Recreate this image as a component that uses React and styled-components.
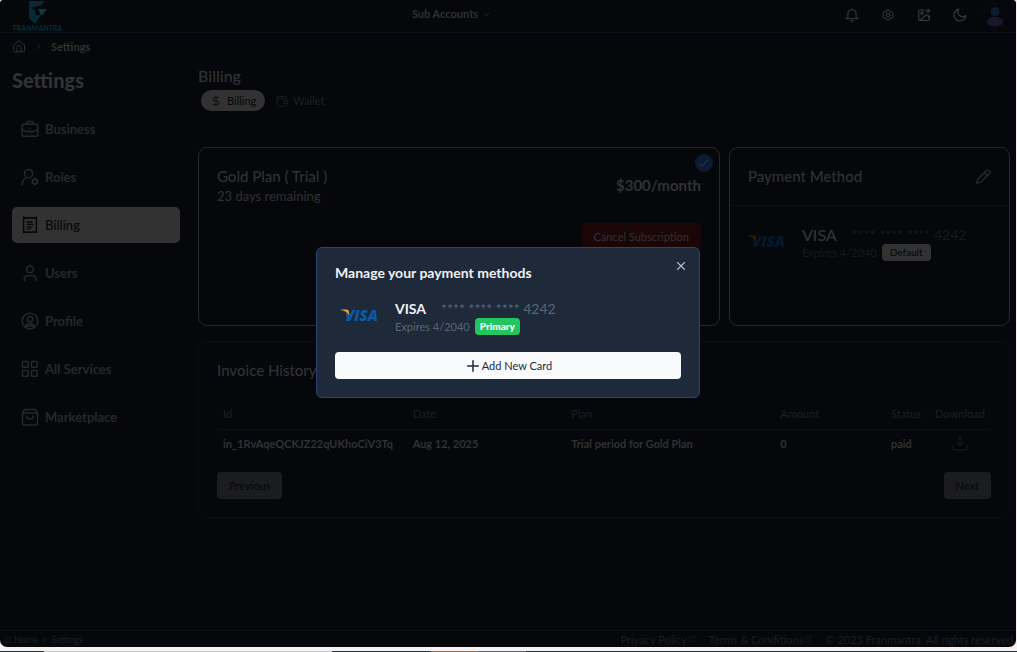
import React, { useState } from 'react'
import styled, { createGlobalStyle } from 'styled-components'
import { ChevronDown, ChevronRight, X, Plus, Check, ExternalLink, DollarSign } from 'lucide-react'


const GlobalStyle = createGlobalStyle`
    * {
        box-sizing: border-box;
    }
    body {
        margin: 0;
        background: #f8f2f4;
        font-family: Lato, 'Open Sans', sans-serif;
        font-size: 12px;
        color: #303234;
    }
    button {
        font: inherit;
        color: inherit;
        border: 0;
        padding: 0;
        background: none;
        cursor: pointer;
    }
    a {
        color: inherit;
        text-decoration: none;
    }
    h1, h2, h3, p {
        margin: 0;
    }
    svg {
        display: block;
        flex: none;
    }
`

const Desktop = styled.div`
    display: flex;
    flex-direction: column;
    min-height: 100vh;
`

const Screen = styled.div`
    position: relative;
    flex: 1;
    display: flex;
    flex-direction: column;
    margin: 0 1px 4px 0;
    background: #05070b;
    border-radius: 3px 3px 7px 7px;
    overflow: hidden;
`

const Taskbar = styled.div`
    display: grid;
    grid-template-columns: 44fr 288fr 99fr 47fr 48fr 491fr;
    height: 1px;
`

const TaskbarItem = styled.span`
    background: ${({ color }) => color};
`

const Header = styled.header`
    display: grid;
    grid-template-columns: 1fr auto 1fr;
    align-items: center;
    height: 33px;
    padding: 0 9px 0 12px;
    border-bottom: 1px solid #0c0e1a;
`

const Logo = styled.a`
    display: flex;
    flex-direction: column;
    align-items: center;
    justify-self: start;
    width: 51px;
    color: #072a35;
    font-size: 7px;
    font-weight: 900;
    line-height: 8px;
`

const SubAccounts = styled.button`
    display: flex;
    align-items: center;
    gap: 4px;
    padding-bottom: 4px;
    padding-right: 116px;
    font-size: 11px;
    font-weight: 700;
    line-height: 16px;
`

const HeaderActions = styled.div`
    display: flex;
    align-items: center;
    justify-content: flex-end;
    gap: 16px;
    padding-bottom: 3px;
    color: #3a3c3e;
`

const HeaderIcons = styled.div`
    display: flex;
    align-items: center;
    gap: 22px;
`

const IconButton = styled.button`
    display: flex;
`

const Breadcrumb = styled.nav`
    display: flex;
    align-items: center;
    gap: 8px;
    height: 26px;
    padding: 0 12px;
    font-size: 11px;
    font-weight: 700;
`

const Body = styled.div`
    display: grid;
    grid-template-columns: 168px 1fr;
    gap: 18px;
    flex: 1;
    padding: 7px 6px 0 12px;
`

const PageTitle = styled.h1`
    padding-bottom: 2px;
    font-size: 20px;
    line-height: 28px;
    font-weight: 900;
`

const SideNav = styled.nav`
    display: flex;
    flex-direction: column;
    gap: 12px;
    margin-top: 15px;
`

const SideLink = styled.a`
    display: flex;
    align-items: center;
    gap: 6px;
    height: 36px;
    padding: 0 9px;
    border-radius: 5px;
    font-size: 13px;
    font-weight: ${({ $active }) => ($active ? 500 : 700)};
    color: ${({ $active }) => ($active ? '#05070b' : '#262829')};
    background: ${({ $active }) => ($active ? '#323232' : 'transparent')};
`

const Main = styled.main`
    min-width: 0;
`

const SectionTitle = styled.h2`
    padding-bottom: 2px;
    font-size: 16px;
    line-height: 20px;
    font-weight: 500;
`

const Tabs = styled.div`
    display: flex;
    gap: 2px;
    padding: 2px 3px 0;
`

const Tab = styled.button`
    display: flex;
    align-items: center;
    gap: 5px;
    height: 21px;
    padding: 0 9px;
    border-radius: 11px;
    font-size: 11px;
    color: ${({ $active }) => ($active ? '#05070b' : '#1c2024')};
    background: ${({ $active }) => ($active ? '#323232' : 'transparent')};
`

const Cards = styled.div`
    display: grid;
    grid-template-columns: 13fr 7fr;
    gap: 9px;
    margin-top: 36px;
`

const Card = styled.section`
    border: 1px solid ${({ $soft }) => ($soft ? '#0b0e15' : '#25292d')};
    border-radius: 9px;
`

const PlanCard = styled(Card)`
    position: relative;
    display: flex;
    justify-content: space-between;
    min-height: 179px;
    padding: 18px;
`

const CurrentBadge = styled.span`
    position: absolute;
    top: 6px;
    right: 6px;
    display: grid;
    place-items: center;
    width: 18px;
    height: 18px;
    border-radius: 50%;
    color: #3a4552;
    background: #0c1a33;
`

const CardTitle = styled.h3`
    padding-bottom: 2px;
    font-size: 15px;
    line-height: 20px;
    font-weight: 500;
`

const PlanNote = styled.p`
    font-size: 13px;
    line-height: 16px;
`

const PlanSide = styled.div`
    display: flex;
    flex-direction: column;
    align-items: flex-end;
    gap: 26px;
    padding-top: 9px;
`

const Price = styled.strong`
    padding-bottom: 2px;
    font-size: 15px;
    line-height: 20px;
`

const CancelButton = styled.button`
    height: 27px;
    padding: 0 12px;
    border-radius: 4px;
    font-size: 11px;
    background: #1b0607;
`

const PaymentHead = styled.div`
    display: flex;
    align-items: center;
    justify-content: space-between;
    height: 58px;
    padding: 0 18px;
    border-bottom: 1px solid #0b0e13;
`

const CreditCard = styled.div`
    display: flex;
    align-items: center;
    gap: 14px;
    padding: ${({ $inModal }) => ($inModal ? '0 6px' : '19px 18px')};
`

const CardLine = styled.div`
    display: flex;
    align-items: center;
    gap: ${({ $wide }) => ($wide ? 15 : 5)}px;
    height: 18px;
    font-size: ${({ $wide }) => ($wide ? 14 : 11)}px;
    color: ${({ $inModal }) => ($inModal ? '#5a6575' : '#15181c')};
`

const Brand = styled.span`
    font-size: ${({ $inModal }) => ($inModal ? 14 : 16)}px;
    font-weight: ${({ $inModal }) => ($inModal ? 700 : 500)};
    color: ${({ $inModal }) => ($inModal ? '#eef1f5' : '#323436')};
`

const Badge = styled.span`
    display: flex;
    align-items: center;
    height: 17px;
    padding: 0 ${({ $inModal }) => ($inModal ? 5 : 8)}px;
    border-radius: 4px;
    font-size: 10px;
    font-weight: ${({ $inModal }) => ($inModal ? 900 : 500)};
    color: ${({ $inModal }) => ($inModal ? '#ffffff' : '#05070b')};
    background: ${({ $inModal }) => ($inModal ? '#22c55e' : '#323232')};
`

const InvoiceCard = styled(Card)`
    margin-top: 15px;
    padding: 18px;
`

const InvoiceTable = styled.table`
    width: 100%;
    margin-top: 16px;
    border-collapse: collapse;
    table-layout: fixed;
    font-size: 11px;
    text-align: left;
    white-space: nowrap;
    th {
        height: 31px;
        padding: 0 0 0 6px;
        font-weight: 500;
        color: #1a1e22;
        border-bottom: 1px solid #0b0e13;
    }
    td {
        height: 28px;
        padding: 0 0 0 6px;
        font-weight: 700;
    }
    th:last-child, td:last-child {
        padding: 0;
        text-align: center;
    }
`

const DownloadButton = styled(IconButton)`
    margin: 0 auto;
    color: #1c1f22;
`

const Pager = styled.div`
    display: flex;
    justify-content: space-between;
    margin-top: 15px;
`

const PagerButton = styled.button`
    height: 27px;
    padding: 0 12px;
    border-radius: 4px;
    font-size: 11px;
    color: #05070b;
    background: #1b1c1e;
`

const Footer = styled.footer`
    display: flex;
    align-items: center;
    justify-content: space-between;
    height: 17px;
    padding: 0 3px 0 5px;
    border-top: 1px solid #0b0e13;
    font-size: 11px;
    color: #1b1e21;
    white-space: nowrap;
`

const FooterGroup = styled.div`
    display: flex;
    align-items: center;
    gap: ${({ $gap }) => $gap}px;
    font-size: ${({ $small }) => ($small ? 9 : 11)}px;
    a {
        display: flex;
        align-items: center;
        gap: 1px;
    }
`

const Overlay = styled.div`
    position: absolute;
    inset: 0;
    display: flex;
    align-items: center;
    justify-content: center;
    padding-bottom: 2px;
`

const Modal = styled.div`
    position: relative;
    width: 384px;
    padding: 15px 18px 18px;
    border: 1px solid #2b4272;
    border-radius: 6px;
    background: #1e293a;
`

const ModalTitle = styled.h2`
    margin-bottom: 16px;
    font-size: 14px;
    line-height: 20px;
    font-weight: 700;
    color: #eef1f5;
`

const CloseButton = styled(IconButton)`
    position: absolute;
    top: 11px;
    right: 11px;
    color: #b4bac4;
`

const AddButton = styled.button`
    display: flex;
    align-items: center;
    justify-content: center;
    width: 100%;
    height: 27px;
    margin-top: 17px;
    border-radius: 4px;
    font-size: 11px;
    color: #1e293a;
    background: #f8fafc;
`


const Icon = ({ size = 18, stroke = 1.5, children }) => (
    <svg width={size} height={size} viewBox='0 0 24 24' fill='none' stroke='currentColor' strokeWidth={stroke} strokeLinecap='round' strokeLinejoin='round'>
        {children}
    </svg>
)

const BusinessIcon = () => (
    <Icon stroke={2}>
        <rect x='1.500' y='5.500' width='21' height='16' rx='2.500' />
        <path d='M7.500 5.500V4.500A2.500 2.500 0 0 1 10 2h4a2.500 2.500 0 0 1 2.500 2.500v1M1.500 12c4 5 17 5 21 0M12 12v.1' />
    </Icon>
)

const RolesIcon = () => (
    <Icon stroke={2}>
        <circle cx='10' cy='7.500' r='5.500' />
        <path d='M1.500 22.500c.3-4.500 2-7.500 5-9.500' />
        <circle cx='18.500' cy='18' r='3.200' strokeWidth='2.200' />
        <path strokeWidth='2.400' d='M18.500 13.800v.4M18.500 21.800v.4M14.900 15.900l.3.2M21.800 19.900l.3.2M14.900 20.100l.3-.2M21.800 16.100l.3-.2' />
    </Icon>
)

const BillingIcon = () => (
    <Icon stroke={2}>
        <path strokeLinecap='butt' strokeLinejoin='miter' d='M3.500 2l1.700 1 1.700-1 1.700 1 1.700-1 1.700 1 1.700-1 1.700 1 1.700-1 1.700 1 1.700-1v20l-1.700-1-1.700 1-1.700-1-1.700 1-1.700-1-1.700 1-1.700-1-1.700 1-1.700-1-1.700 1z' />
        <path strokeWidth='1.700' d='M8 8h7M8 11.200h8M8 14.400h7M8 17.300h5' />
    </Icon>
)

const UsersIcon = () => (
    <Icon stroke={2}>
        <circle cx='12' cy='7' r='4.500' />
        <path d='M4.500 22v-2.500a4 4 0 0 1 4-4h7a4 4 0 0 1 4 4V22' />
    </Icon>
)

const ProfileIcon = () => (
    <Icon stroke={2}>
        <circle cx='12' cy='12' r='10.500' />
        <circle cx='12' cy='9.500' r='3.500' />
        <path d='M6.500 20c-.5-3 1.500-4 3.500-4h4c2 0 4 1 3.500 4' />
        <path d='M7 18.500h10' />
    </Icon>
)

const ServicesIcon = () => (
    <Icon stroke={2}>
        <rect x='2' y='2' width='7.500' height='7.500' rx='1' />
        <rect x='14' y='2' width='7.500' height='7.500' rx='1' />
        <rect x='2' y='14' width='7.500' height='7.500' rx='1' />
        <rect x='14' y='14' width='7.500' height='7.500' rx='1' />
    </Icon>
)

const MarketIcon = () => (
    <Icon stroke={2}>
        <path d='M2 6.500L4.500 2h15L22 6.500V20a2.500 2.500 0 0 1-2.500 2.500h-15A2.500 2.500 0 0 1 2 20zM2 6.500h20M7.500 10.500c0 5.500 9 5.500 9 0' />
    </Icon>
)

const HomeIcon = () => (
    <Icon size={14} stroke={1.7}>
        <path d='M2.500 10.500L12 2.500l9.500 8V20a2 2 0 0 1-2 2h-15a2 2 0 0 1-2-2zM8.500 22v-7.500a3.500 3.500 0 0 1 7 0V22' />
    </Icon>
)

const BellIcon = () => (
    <Icon size={14} stroke={1.9}>
        <path d='M1.500 18.500h21M4.500 18.500C5 16 5 13 5 10a7 7 0 0 1 14 0c0 3 0 6 .5 8.500M10 22h4M12 1.500V3' />
    </Icon>
)

const GearIcon = () => (
    <Icon size={14} stroke={1.7}>
        <path d='M10 3.500h4l.8 2.600 1.800 1 2.600-.6 2 3.500-1.800 2 1.800 2-2 3.500-2.600-.6-1.800 1-.8 2.600h-4l-.8-2.600-1.800-1-2.600.6-2-3.500 1.800-2-1.800-2 2-3.500 2.600.6 1.800-1z' />
        <circle cx='12' cy='12' r='3.200' />
    </Icon>
)

const ImageIcon = () => (
    <Icon size={14} stroke={1.9}>
        <path d='M13 3.500H5a2 2 0 0 0-2 2v14a2 2 0 0 0 2 2h14a2 2 0 0 0 2-2V12M5.500 21L16 11.500l5 4.500M19 1.500v7M15.500 5h7' />
        <circle cx='8.500' cy='9' r='2' />
    </Icon>
)

const MoonIcon = () => (
    <Icon size={14} stroke={1.9}>
        <path d='M10 2a8 8 0 0 0 12 10.500A10.200 10.200 0 1 1 10 2z' />
    </Icon>
)

const WalletIcon = () => (
    <Icon size={12} stroke={1.8}>
        <path d='M21 8V5a2 2 0 0 0-2-2H5a3 3 0 0 0-3 3v13a3 3 0 0 0 3 3h14a2 2 0 0 0 2-2v-3M2 7.500h17a2 2 0 0 1 2 2V11M22.500 11H18a3 3 0 0 0 0 6h4.500z' />
    </Icon>
)

const PencilIcon = () => (
    <Icon size={16} stroke={1.6}>
        <path d='M2.500 21.500l1.500-6L17 2.500a2.800 2.800 0 0 1 4.500 4.500L8.500 20zM14 5.500l4.500 4.500' />
    </Icon>
)

const DownloadIcon = () => (
    <Icon size={16}>
        <path d='M12 1.500V16M7 11l5 5 5-5M1.500 16v4a2.500 2.500 0 0 0 2.500 2.500h16a2.500 2.500 0 0 0 2.500-2.500v-4' />
    </Icon>
)

const LogoMark = () => (
    <svg width='20' height='24' viewBox='0 0 20 24'>
        <path fill='#072a35' d='M1 1h16l-4 4.500L6 7 3 8l4 2 1 5h5l-6 9-6-6z' />
        <path fill='#0a3944' d='M10 9h9l-5 6.500h-1z' />
    </svg>
)

const Avatar = () => (
    <svg width='24' height='24' viewBox='0 0 24 24'>
        <circle cx='12' cy='12' r='11.500' fill='#05070b' stroke='#0a0e18' />
        <circle cx='12' cy='8.500' r='4.500' fill='#0c1a2e' />
        <path d='M3.500 19.500a8.500 6 0 0 1 17 0 11 11 0 0 1-17 0z' fill='#1a152a' />
    </svg>
)

const VisaLogo = ({ dim }) => (
    <svg width='40' height='24' viewBox='0 0 40 24'>
        <text x='4' y='16' fontFamily='Open Sans' fontSize='15' fontWeight='800' fontStyle='italic' fill={dim ? '#03182a' : '#0b5aa6'}>VISA</text>
        <path d='M0 4.500h5.500c1.500 0 2 .8 2.300 2l.9 4.500C7 8 4 5.500 0 5z' fill={dim ? '#2d1e08' : '#f5a11c'} />
    </svg>
)

const PaymentCard = ({ inModal, badge }) => (
    <CreditCard $inModal={inModal}>
        <VisaLogo dim={!inModal} />
        <div>
            <CardLine $wide $inModal={inModal}>
                <Brand $inModal={inModal}>VISA</Brand>
                <span>**** **** **** 4242</span>
            </CardLine>
            <CardLine $inModal={inModal}>
                <span>Expires 4/2040</span>
                <Badge $inModal={inModal}>{badge}</Badge>
            </CardLine>
        </div>
    </CreditCard>
)

const links = [
    { name: 'Business', icon: BusinessIcon },
    { name: 'Roles', icon: RolesIcon },
    { name: 'Billing', icon: BillingIcon },
    { name: 'Users', icon: UsersIcon },
    { name: 'Profile', icon: ProfileIcon },
    { name: 'All Services', icon: ServicesIcon },
    { name: 'Marketplace', icon: MarketIcon }
]

const columns = [
    { name: 'Id', width: '24.5%' },
    { name: 'Date', width: '20.5%' },
    { name: 'Plan', width: '27%' },
    { name: 'Amount', width: '14.3%' },
    { name: 'Status', width: '5.7%' },
    { name: 'Download', width: '8%' }
]

const invoices = [
    { id: 'in_1RvAqeQCKJZ22qUKhoCiV3Tq', date: 'Aug 12, 2025', plan: 'Trial period for Gold Plan', amount: 0, status: 'paid' }
]

const taskbarColors = ['#25323b', '#c9c5c7', '#25323b', '#a8683a', '#66686c', '#25323b']

const App = () => {
    const [open, setOpen] = useState(true)

    return (
        <Desktop>
            <GlobalStyle />
            <Screen>
                <Header>
                    <Logo href='#home'>
                        <LogoMark />
                        FRANMANTRA
                    </Logo>
                    <SubAccounts>
                        Sub Accounts
                        <ChevronDown size={9} />
                    </SubAccounts>
                    <HeaderActions>
                        <HeaderIcons>
                            <IconButton aria-label='Notifications'><BellIcon /></IconButton>
                            <IconButton aria-label='Preferences'><GearIcon /></IconButton>
                            <IconButton aria-label='Media'><ImageIcon /></IconButton>
                            <IconButton aria-label='Theme'><MoonIcon /></IconButton>
                        </HeaderIcons>
                        <IconButton aria-label='Account'><Avatar /></IconButton>
                    </HeaderActions>
                </Header>
                <Breadcrumb>
                    <a href='#home' aria-label='Home'><HomeIcon /></a>
                    <ChevronRight size={9} />
                    <span>Settings</span>
                </Breadcrumb>
                <Body>
                    <aside>
                        <PageTitle>Settings</PageTitle>
                        <SideNav>
                            {links.map(({ name, icon: LinkIcon }) => (
                                <SideLink key={name} href={`#${name}`} $active={name === 'Billing'}>
                                    <LinkIcon />
                                    {name}
                                </SideLink>
                            ))}
                        </SideNav>
                    </aside>
                    <Main>
                        <SectionTitle>Billing</SectionTitle>
                        <Tabs>
                            <Tab $active><DollarSign size={12} strokeWidth={1.5} />Billing</Tab>
                            <Tab><WalletIcon />Wallet</Tab>
                        </Tabs>
                        <Cards>
                            <PlanCard>
                                <div>
                                    <CardTitle>Gold Plan ( Trial )</CardTitle>
                                    <PlanNote>23 days remaining</PlanNote>
                                </div>
                                <PlanSide>
                                    <Price>$300/month</Price>
                                    <CancelButton>Cancel Subscription</CancelButton>
                                </PlanSide>
                                <CurrentBadge><Check size={13} strokeWidth={1.5} /></CurrentBadge>
                            </PlanCard>
                            <Card>
                                <PaymentHead>
                                    <CardTitle>Payment Method</CardTitle>
                                    <IconButton aria-label='Edit payment method' onClick={() => setOpen(true)}><PencilIcon /></IconButton>
                                </PaymentHead>
                                <PaymentCard badge='Default' />
                            </Card>
                        </Cards>
                        <InvoiceCard $soft>
                            <CardTitle>Invoice History</CardTitle>
                            <InvoiceTable>
                                <colgroup>
                                    {columns.map(({ name, width }) => <col key={name} style={{ width }} />)}
                                </colgroup>
                                <thead>
                                    <tr>
                                        {columns.map(({ name }) => <th key={name}>{name}</th>)}
                                    </tr>
                                </thead>
                                <tbody>
                                    {invoices.map(item => (
                                        <tr key={item.id}>
                                            <td>{item.id}</td>
                                            <td>{item.date}</td>
                                            <td>{item.plan}</td>
                                            <td>{item.amount}</td>
                                            <td>{item.status}</td>
                                            <td><DownloadButton aria-label='Download invoice'><DownloadIcon /></DownloadButton></td>
                                        </tr>
                                    ))}
                                </tbody>
                            </InvoiceTable>
                            <Pager>
                                <PagerButton>Previous</PagerButton>
                                <PagerButton>Next</PagerButton>
                            </Pager>
                        </InvoiceCard>
                    </Main>
                </Body>
                <Footer>
                    <FooterGroup $gap={4} $small>
                        <a href='#home'>⌂ Home</a>
                        <span>&gt;</span>
                        <a href='#settings'>Settings</a>
                    </FooterGroup>
                    <FooterGroup $gap={13}>
                        <a href='#privacy'>Privacy Policy<ExternalLink size={8} /></a>
                        <a href='#terms'>Terms &amp; Conditions<ExternalLink size={8} /></a>
                        <span>© 2025 Franmantra. All rights reserved</span>
                    </FooterGroup>
                </Footer>
                {open && (
                    <Overlay>
                        <Modal role='dialog' aria-modal='true' aria-labelledby='modal-title'>
                            <ModalTitle id='modal-title'>Manage your payment methods</ModalTitle>
                            <CloseButton aria-label='Close' onClick={() => setOpen(false)}><X size={14} /></CloseButton>
                            <PaymentCard inModal badge='Primary' />
                            <AddButton><Plus size={18} strokeWidth={2} />Add New Card</AddButton>
                        </Modal>
                    </Overlay>
                )}
            </Screen>
            <Taskbar>
                {taskbarColors.map((color, i) => <TaskbarItem key={i} color={color} />)}
            </Taskbar>
        </Desktop>
    )
}

export default App
